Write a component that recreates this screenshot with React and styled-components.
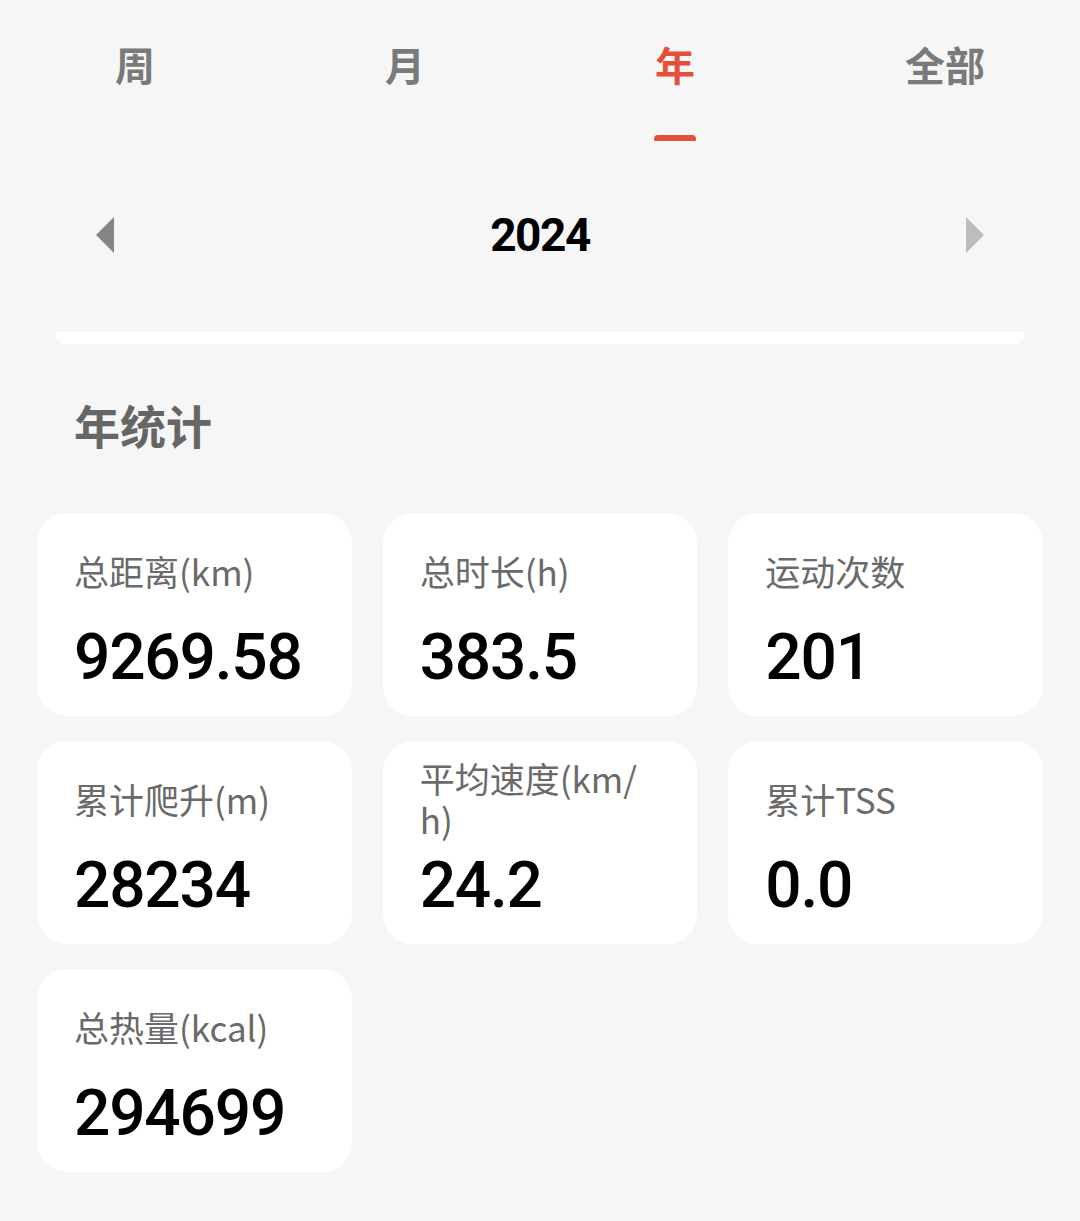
import React from "react";
import styled, { createGlobalStyle } from "styled-components";

const Global = createGlobalStyle`
  html, body { margin: 0; padding: 0; background: #f6f6f6; }
  body { font-family: "Noto Sans CJK SC", "Noto Sans", Roboto, sans-serif; }
`;

const Page = styled.div`
  width: 1080px;
  min-height: 1221px;
  background: #f6f6f6;
  display: flex;
  flex-direction: column;
`;

const Tabs = styled.div`
  display: grid;
  grid-template-columns: repeat(4, 1fr);
`;

const Tab = styled.div`
  display: flex;
  flex-direction: column;
  align-items: center;
  padding-top: 36px;
`;

const TabText = styled.span`
  font-size: 40px;
  line-height: 56px;
  font-weight: 700;
  color: ${(p) => (p.$active ? "#e4503a" : "#7a7a7a")};
`;

const Indicator = styled.div`
  margin-top: 43px;
  width: 42px;
  height: 6px;
  border-radius: 4px 4px 1px 1px;
  background: ${(p) => (p.$active ? "#e4503a" : "transparent")};
`;

const YearRow = styled.div`
  margin-top: 64px;
  height: 60px;
  padding: 0 96px;
  display: flex;
  align-items: center;
  justify-content: space-between;
`;

const Year = styled.span`
  font-family: Roboto, "Liberation Sans", sans-serif;
  font-size: 46px;
  font-weight: 700;
  letter-spacing: -1.5px;
  color: #000;
`;

const Arrow = styled.svg`
  width: 18px;
  height: 36px;
  display: block;
`;

const Sliver = styled.div`
  margin: 67px 55px 0;
  height: 12px;
  background: #fff;
  border-radius: 0 0 16px 16px;
  box-shadow: 0 -8px 6px -6px rgba(0, 0, 0, 0.04);
`;

const Title = styled.h2`
  margin: 50px 0 0;
  padding-left: 74px;
  font-size: 46px;
  line-height: 60px;
  font-weight: 700;
  color: #666;
`;

const Grid = styled.div`
  margin-top: 59px;
  padding: 0 37px;
  display: grid;
  grid-template-columns: repeat(3, 1fr);
  column-gap: 31px;
  row-gap: 25px;
`;

const Card = styled.div`
  height: 203px;
  box-sizing: border-box;
  background: #fff;
  border-radius: 30px;
  padding: 17px 36px 0 37px;
  display: flex;
  flex-direction: column;
`;

const Label = styled.div`
  height: 80px;
  display: flex;
  align-items: center;
  font-size: 35px;
  line-height: 41px;
  font-weight: 400;
  color: #6a6a6a;
  word-break: break-all;
`;

const Value = styled.div`
  margin-top: 13px;
  font-family: Roboto, "Liberation Sans", sans-serif;
  font-size: 64px;
  line-height: 70px;
  font-weight: 500;
  letter-spacing: -1.2px;
  color: #000;
`;

const tabs = [
  { t: "周" },
  { t: "月" },
  { t: "年", active: true },
  { t: "全部" },
];

const stats = [
  { label: "总距离(km)", value: "9269.58" },
  { label: "总时长(h)", value: "383.5" },
  { label: "运动次数", value: "201" },
  { label: "累计爬升(m)", value: "28234" },
  { label: "平均速度(km/h)", value: "24.2" },
  { label: "累计TSS", value: "0.0" },
  { label: "总热量(kcal)", value: "294699" },
];

export default function App() {
  return (
    <Page>
      <Global />
      <Tabs>
        {tabs.map((x) => (
          <Tab key={x.t}>
            <TabText $active={x.active}>{x.t}</TabText>
            <Indicator $active={x.active} />
          </Tab>
        ))}
      </Tabs>
      <YearRow>
        <Arrow viewBox="0 0 18 36">
          <polygon points="18,0 18,36 0,18" fill="#858585" />
        </Arrow>
        <Year>2024</Year>
        <Arrow viewBox="0 0 18 36">
          <polygon points="0,0 0,36 18,18" fill="#bdbdbd" />
        </Arrow>
      </YearRow>
      <Sliver />
      <Title>年统计</Title>
      <Grid>
        {stats.map((s) => (
          <Card key={s.label}>
            <Label>{s.label}</Label>
            <Value>{s.value}</Value>
          </Card>
        ))}
      </Grid>
    </Page>
  );
}
